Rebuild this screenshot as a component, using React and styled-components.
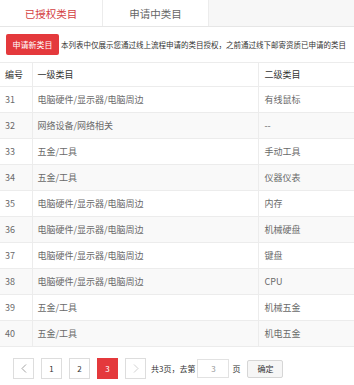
import React from "react";
import styled, { createGlobalStyle } from "styled-components";

const GlobalStyle = createGlobalStyle`
    body {
        margin: 0;
        background: #fff;
        font-family: "Noto Sans CJK SC", "Noto Sans", sans-serif;
    }
`;

const Page = styled.div`
    width: 354px;
    height: 385px;
    overflow: hidden;
    background: #fff;
`;

const TabBar = styled.div`
    display: flex;
    height: 26px;
    background: #f7f7f7;
    border-bottom: 1px solid #e6e6e6;
`;

const Tab = styled.div`
    width: ${(p) => p.$w}px;
    display: flex;
    align-items: center;
    justify-content: center;
    background: #fff;
    border-right: 1px solid #ececec;
    font-size: 10.5px;
    color: ${(p) => (p.$active ? "#d4403f" : "#666")};
`;

const Toolbar = styled.div`
    display: flex;
    align-items: center;
    gap: 2px;
    padding: 7px 0 0 6px;
    white-space: nowrap;
`;

const RedButton = styled.button`
    flex: none;
    width: 53px;
    height: 21px;
    padding: 0;
    border: none;
    border-radius: 2px;
    background: #e4393c;
    color: #fff;
    font-family: inherit;
    font-size: 8px;
`;

const Note = styled.span`
    font-size: 7.5px;
    color: #333;
`;

const Table = styled.table`
    width: 100%;
    margin-top: 7px;
    border-collapse: collapse;
    table-layout: fixed;
`;

const Th = styled.th`
    height: 23px;
    padding: 0 0 0 ${(p) => p.$pad || 5}px;
    text-align: left;
    font-weight: normal;
    font-size: 9px;
    color: #333;
    border-top: 1px solid #ececec;
    border-bottom: 1px solid #ececec;
    & + & {
        border-left: 1px solid #ececec;
    }
`;

const Tr = styled.tr`
    background: ${(p) => (p.$striped ? "#f9f9f9" : "#fff")};
`;

const Td = styled.td`
    height: 25px;
    padding: 0 0 0 ${(p) => p.$pad || 5}px;
    font-size: 9px;
    color: #6a6a6a;
    border-bottom: 1px solid #ececec;
    white-space: nowrap;
    & + & {
        border-left: 1px solid #ececec;
    }
`;

const Pager = styled.div`
    display: flex;
    align-items: center;
    padding: 11px 0 0 13px;
    font-size: 8px;
    color: #333;
`;

const PageBtn = styled.div`
    width: 19px;
    height: 19px;
    margin-right: 7px;
    display: flex;
    align-items: center;
    justify-content: center;
    border: 1px solid ${(p) => (p.$active ? "#e4393c" : "#ddd")};
    background: ${(p) => (p.$active ? "#e4393c" : "#fff")};
    color: ${(p) => (p.$active ? "#fff" : "#333")};
    font-size: 8px;
`;

const PageText = styled.span`
    margin-left: -2px;
`;

const PageInput = styled.div`
    width: 30px;
    height: 17px;
    margin: 0 3px 0 2px;
    display: flex;
    align-items: center;
    justify-content: center;
    border: 1px solid #e2e2e2;
    background: #fff;
    color: #999;
    font-size: 8px;
`;

const OkButton = styled.div`
    width: 34px;
    height: 16px;
    margin-left: 7px;
    display: flex;
    align-items: center;
    justify-content: center;
    border: 1px solid #d6d6d6;
    border-radius: 2px;
    background: #f6f6f6;
    color: #333;
    font-size: 8px;
`;

const Chevron = ({ dir, color }) => (
    <svg width="6" height="9" viewBox="0 0 6 9">
        <path
            d={dir === "left" ? "M5 0.5 L1 4.5 L5 8.5" : "M1 0.5 L5 4.5 L1 8.5"}
            fill="none"
            stroke={color}
            strokeWidth="0.9"
        />
    </svg>
);

const rows = [
    ["31", "电脑硬件/显示器/电脑周边", "有线鼠标"],
    ["32", "网络设备/网络相关", "--"],
    ["33", "五金/工具", "手动工具"],
    ["34", "五金/工具", "仪器仪表"],
    ["35", "电脑硬件/显示器/电脑周边", "内存"],
    ["36", "电脑硬件/显示器/电脑周边", "机械硬盘"],
    ["37", "电脑硬件/显示器/电脑周边", "键盘"],
    ["38", "电脑硬件/显示器/电脑周边", "CPU"],
    ["39", "五金/工具", "机械五金"],
    ["40", "五金/工具", "机电五金"],
];

const App = () => {
    return (
        <Page>
            <GlobalStyle />
            <TabBar>
                <Tab $w={102} $active>已授权类目</Tab>
                <Tab $w={105}>申请中类目</Tab>
            </TabBar>
            <Toolbar>
                <RedButton>申请新类目</RedButton>
                <Note>本列表中仅展示您通过线上流程申请的类目授权，之前通过线下邮寄资质已申请的类目</Note>
            </Toolbar>
            <Table>
                <colgroup>
                    <col style={{ width: 32 }} />
                    <col style={{ width: 226 }} />
                    <col />
                </colgroup>
                <thead>
                    <tr>
                        <Th>编号</Th>
                        <Th>一级类目</Th>
                        <Th $pad={6}>二级类目</Th>
                    </tr>
                </thead>
                <tbody>
                    {rows.map((r, i) => (
                        <Tr key={r[0]} $striped={i % 2 === 1}>
                            <Td>{r[0]}</Td>
                            <Td>{r[1]}</Td>
                            <Td $pad={6}>{r[2]}</Td>
                        </Tr>
                    ))}
                </tbody>
            </Table>
            <Pager>
                <PageBtn>
                    <Chevron dir="left" color="#999" />
                </PageBtn>
                <PageBtn>1</PageBtn>
                <PageBtn>2</PageBtn>
                <PageBtn $active>3</PageBtn>
                <PageBtn>
                    <Chevron dir="right" color="#ccc" />
                </PageBtn>
                <PageText>共3页，去第</PageText>
                <PageInput>3</PageInput>
                <span>页</span>
                <OkButton>确定</OkButton>
            </Pager>
        </Page>
    );
};

export default App;
